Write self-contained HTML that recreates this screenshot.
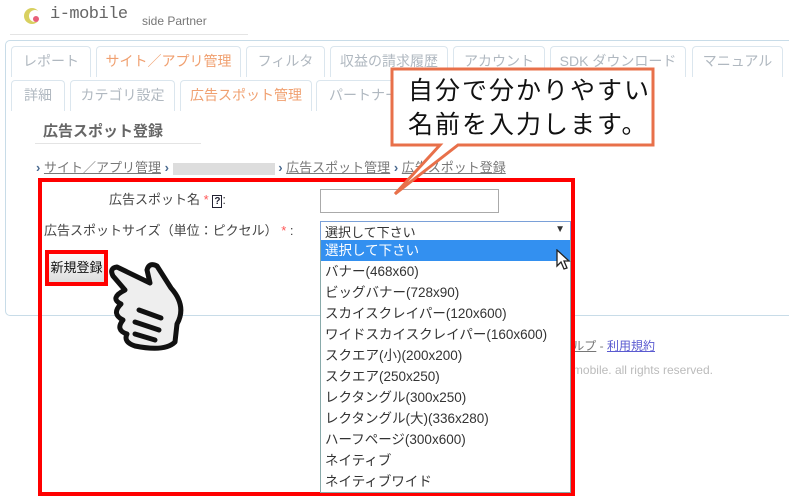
<!DOCTYPE html>
<html><head><meta charset="utf-8"><style>
*{margin:0;padding:0;box-sizing:border-box}
body{width:789px;height:501px;background:#fff;position:relative;overflow:hidden;font-family:"Liberation Sans","Noto Sans CJK JP",sans-serif;color:#333}
.a{position:absolute;white-space:nowrap}
.tab{position:absolute;height:31px;border:1px solid #dbe6ee;border-bottom:none;border-radius:4px 4px 0 0;color:#b0b8c0;font-size:14px;text-align:center;line-height:29px;background:#fff}
.or{color:#f0a070}
.li{position:absolute;left:321px;width:249px;height:21px;font-size:13.5px;line-height:21px;padding-left:4px;color:#333}
.ch{color:#4a6a90;font-weight:bold}
</style></head><body>
<svg class="a" style="left:22px;top:6px" width="24" height="20"><circle cx="10" cy="10" r="8" fill="#d8d060"/><circle cx="13" cy="10" r="6" fill="#fff"/><circle cx="14" cy="13" r="3" fill="#e8607a"/></svg>
<div class="a" style="left:50px;top:5px;font-size:17px;font-family:'Liberation Mono',monospace;color:#666;letter-spacing:-0.5px">i-mobile</div>
<div class="a" style="left:142px;top:14px;font-size:12px;color:#777">side Partner</div>
<div class="a" style="left:10px;top:34px;width:238px;height:1px;background:#e4e4e4"></div>
<div class="a" style="left:5px;top:40px;width:790px;height:276px;border:1px solid #c8dce8;border-radius:5px"></div>
<div class="tab" style="left:11px;top:46px;width:80px">レポート</div>
<div class="tab or" style="left:96px;top:46px;width:145px">サイト／アプリ管理</div>
<div class="tab" style="left:246px;top:46px;width:79px">フィルタ</div>
<div class="tab" style="left:330px;top:46px;width:118px">収益の請求履歴</div>
<div class="tab" style="left:453px;top:46px;width:92px">アカウント</div>
<div class="tab" style="left:550px;top:46px;width:136px">SDK ダウンロード</div>
<div class="tab" style="left:692px;top:46px;width:91px">マニュアル</div>
<div class="tab" style="left:11px;top:80px;width:54px">詳細</div>
<div class="tab" style="left:70px;top:80px;width:105px">カテゴリ設定</div>
<div class="tab or" style="left:180px;top:80px;width:132px">広告スポット管理</div>
<div class="tab" style="left:316px;top:80px;width:90px;text-align:left;padding-left:12px">パートナー</div>
<div class="a" style="left:43px;top:120px;font-size:15px;font-weight:bold;color:#666">広告スポット登録</div>
<div class="a" style="left:35px;top:143px;width:166px;height:1px;background:#e4e4e4"></div>
<div class="a" style="left:36px;top:157px;font-size:13px;color:#777"><span class="ch">›</span> <u>サイト／アプリ管理</u> <span class="ch">›</span> <span style="display:inline-block;width:102px;height:12px;background:#ddd;vertical-align:middle"></span> <span class="ch">›</span> <u>広告スポット管理</u> <span class="ch">›</span> <u>広告スポット登録</u></div>
<div class="a" style="right:134px;top:337px;font-size:12px;color:#777"><u>ヘルプ</u> - <u style="color:#5a5ad0">利用規約</u></div>
<div class="a" style="right:76px;top:363px;font-size:12px;color:#bbb">Copyright © i-mobile. all rights reserved.</div>
<div class="a" style="left:38px;top:178px;width:537px;height:318px;border:4px solid #f00"></div>
<div class="a" style="left:109px;top:189px;font-size:13px;color:#444">広告スポット名 <span style="color:#f55">*</span> <span style="border:1px solid #223;font-size:10px;font-weight:bold;padding:0 1px;color:#223">?</span>:</div>
<div class="a" style="left:44px;top:220px;font-size:13px;color:#444">広告スポットサイズ（単位：ピクセル） <span style="color:#f55">*</span> :</div>
<div class="a" style="left:320px;top:189px;width:179px;height:24px;border:1px solid #aaa"></div>
<div class="a" style="left:320px;top:221px;width:251px;height:20px;border:1px solid #7aa0d8;font-size:13px;padding-left:4px;line-height:22px;overflow:hidden;background:#fff">選択して下さい<span style="position:absolute;right:5px;top:-3px;font-size:10px">▼</span></div>
<div class="a" style="left:320px;top:240px;width:251px;height:253px;border:1px solid #8aa;border-top:none;background:#fff"></div>
<div class="li" style="top:240px;background:#3390f0;color:#fff">選択して下さい</div>
<div class="li" style="top:261px">バナー(468x60)</div>
<div class="li" style="top:282px">ビッグバナー(728x90)</div>
<div class="li" style="top:303px">スカイスクレイパー(120x600)</div>
<div class="li" style="top:324px">ワイドスカイスクレイパー(160x600)</div>
<div class="li" style="top:345px">スクエア(小)(200x200)</div>
<div class="li" style="top:366px">スクエア(250x250)</div>
<div class="li" style="top:387px">レクタングル(300x250)</div>
<div class="li" style="top:408px">レクタングル(大)(336x280)</div>
<div class="li" style="top:429px">ハーフページ(300x600)</div>
<div class="li" style="top:450px">ネイティブ</div>
<div class="li" style="top:471px">ネイティブワイド</div>
<svg class="a" style="left:555px;top:249px" width="16" height="22"><path d="M2 1 L2 17 L6 13 L9 20 L12 19 L9 12 L14 12 Z" fill="#fff" stroke="#222" stroke-width="1.3"/></svg>
<div class="a" style="left:45px;top:250px;width:63px;height:36px;border:4px solid #f00;background:linear-gradient(#fafafa,#ddd);font-size:13px;line-height:28px;text-align:center;color:#111">新規登録</div>
<svg class="a" style="left:105px;top:258px" width="90" height="98" viewBox="0 0 90 98">
<g stroke="#111" stroke-width="5" fill="#eee" stroke-linejoin="round" stroke-linecap="round">
<path d="M8 18 Q4 10 12 9 L45 25 L42 12 Q44 4 52 8 L66 30 Q82 48 72 66 L70 84 Q60 94 30 88 Q18 84 22 76 Q10 72 18 62 Q6 56 16 46 Q4 40 20 32 Z"/>
</g>
<g stroke="#111" stroke-width="5" stroke-linecap="round"><path d="M34 52 L56 60"/><path d="M30 64 L54 72"/><path d="M30 76 L50 82"/></g>
</svg>
<svg class="a" style="left:380px;top:66px" width="280" height="135">
<path d="M12 3 L273 3 L273 79 L78 79 L15 128 L60 79 L12 79 Z" fill="#fff" stroke="#e8704a" stroke-width="3"/>
</svg>
<div class="a" style="left:408px;top:74px;font-size:25px;line-height:34px;color:#111;letter-spacing:2px">自分で分かりやすい<br>名前を入力します。</div>
</body></html>
